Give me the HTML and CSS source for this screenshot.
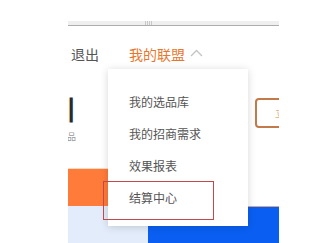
FILE: index.html
```html
<!DOCTYPE html>
<html lang="zh">
<head>
<meta charset="utf-8">
<link rel="stylesheet" href="styles.css">
</head>
<body>
<div class="page">
  <div class="topgap"></div>
  <div class="topbar"><span class="grip"></span></div>
  <nav class="nav">
    <a class="nav-link">退出</a>
    <a class="nav-link active">我的联盟
      <svg class="chev" width="13" height="8" viewBox="0 0 13 8"><path d="M1 7 L6.5 1.5 L12 7" fill="none" stroke="#c4c4c4" stroke-width="1.4"/></svg>
    </a>
  </nav>
  <section class="hero">
    <div class="hero-top">
      <div class="hero-text">
        <div class="hero-title">淘宝联盟引</div>
        <div class="hero-sub">优质商品</div>
      </div>
      <div class="hero-btn">立即</div>
    </div>
    <div class="hero-band">
      <div class="tile-orange"></div>
      <div class="band-rest"></div>
    </div>
    <div class="hero-bottom">
      <div class="tile-light"></div>
      <div class="tile-blue"></div>
    </div>
  </section>
  <div class="dropdown">
    <ul class="menu">
      <li class="menu-item">我的选品库</li>
      <li class="menu-item">我的招商需求</li>
      <li class="menu-item">效果报表</li>
      <li class="menu-item">结算中心</li>
    </ul>
    <div class="highlight"></div>
  </div>
</div>
</body>
</html>
```

FILE: styles.css
```css
* { box-sizing: border-box; }
html, body { margin: 0; padding: 0; background: #fff; }
body {
  font-family: "Noto Sans CJK SC", "Noto Sans", sans-serif;
  width: 309px;
  height: 243px;
  overflow: hidden;
}
.page {
  position: relative;
  margin-left: 68px;
  width: 211px;
  height: 243px;
  overflow: hidden;
  background: #fff;
}
.topgap { height: 21px; }
.topbar {
  height: 5px;
  background: #efefef;
  border-bottom: 1px solid #adadad;
  display: flex;
  padding-left: 77px;
}
.grip {
  width: 7px;
  height: 4px;
  background: repeating-linear-gradient(90deg, #c8c8c8 0 1px, transparent 1px 2px);
}
.nav {
  height: 56px;
  display: flex;
  align-items: center;
  padding-left: 3px;
  gap: 30px;
  font-size: 14px;
  line-height: 20px;
}
.nav-link { color: #555; display: flex; align-items: center; }
.nav-link.active { color: #e8772e; }
.chev { margin-left: 5px; margin-top: -2px; }

.hero-top {
  height: 86px;
  display: flex;
  justify-content: space-between;
  align-items: flex-start;
}
.hero-text { padding-top: 11px; margin-left: -122px; }
.hero-title {
  font-size: 26px;
  font-weight: 700;
  line-height: 32px;
  color: #2b2b2b;
  white-space: nowrap;
}
.hero-sub {
  font-size: 9px;
  line-height: 12px;
  color: #999;
  margin-top: 6px;
  text-align: right;
  white-space: nowrap;
}
.hero-btn {
  margin-top: 16px;
  margin-right: -40px;
  width: 64px;
  height: 30px;
  border: 2px solid #c27a4a;
  border-radius: 4px;
  font-size: 10px;
  line-height: 26px;
  color: #e0b080;
  padding-left: 18px;
}
.hero-band { height: 38px; display: flex; }
.tile-orange {
  width: 40px;
  background: #ff7b3a;
  border-top: 1px solid #ffd9bf;
}
.band-rest { flex: 1; background: #fff; }
.hero-bottom { height: 37px; display: flex; }
.tile-light { width: 80px; background: #e3ecfa; }
.tile-blue {
  flex: 1;
  background: #0a5ff2;
  border-top: 1px solid #d7a88f;
}

.dropdown {
  position: absolute;
  left: 40px;
  top: 69px;
  width: 140px;
  height: 157px;
  background: #fff;
  box-shadow: 0 1px 8px rgba(0, 0, 0, 0.16);
}
.menu {
  list-style: none;
  margin: 0;
  padding: 17px 0 0 21px;
}
.menu-item {
  height: 32px;
  line-height: 32px;
  font-size: 12px;
  color: #555;
  white-space: nowrap;
}
.highlight {
  position: absolute;
  left: -5px;
  top: 112px;
  width: 111px;
  height: 39px;
  border: 1px solid #c4484a;
}
```
